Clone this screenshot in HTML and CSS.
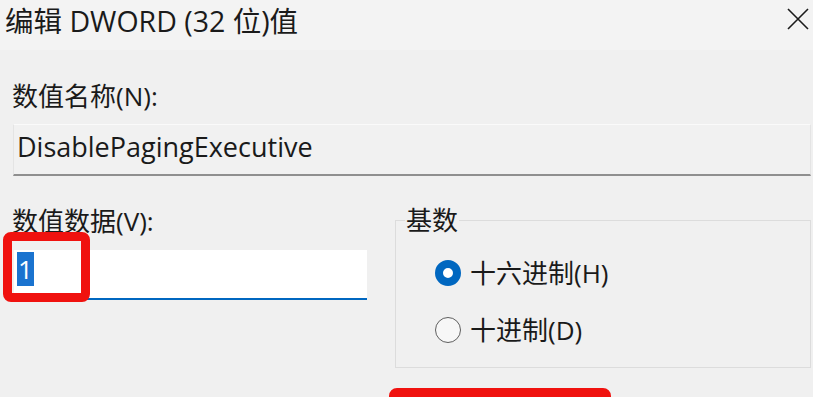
FILE: index.html
```html
<!DOCTYPE html>
<html lang="zh-CN">
<head>
<meta charset="utf-8">
<title>编辑 DWORD (32 位)值</title>
<link rel="stylesheet" href="styles.css">
</head>
<body>
<div class="dialog">
  <div class="titlebar">
    <span class="title">编辑 DWORD (32 位)值</span>
    <svg class="close" width="24" height="22" viewBox="0 0 24 22" aria-hidden="true">
      <path d="M2 1 L22 21 M22 1 L2 21" stroke="#1b1b1b" stroke-width="1.6" fill="none"/>
    </svg>
  </div>
  <div class="content">
    <div class="label first">数值名称(N):</div>
    <div class="namefield">DisablePagingExecutive</div>
    <div class="row">
      <div class="leftcol">
        <div class="label">数值数据(V):</div>
        <div class="valueinput"><span class="sel">1</span></div>
      </div>
      <fieldset class="group">
        <legend>基数</legend>
        <div class="radio"><span class="dot on"></span><span>十六进制(H)</span></div>
        <div class="radio"><span class="dot"></span><span>十进制(D)</span></div>
      </fieldset>
    </div>
  </div>
  <div class="mark mark-value"></div>
  <div class="mark mark-ok"></div>
</div>
</body>
</html>
```
FILE: styles.css
```css
html, body {
  margin: 0;
  padding: 0;
  background: #f0f0f0;
  overflow: hidden;
}
.dialog {
  position: relative;
  width: 813px;
  height: 397px;
  font-family: "Open Sans", "Noto Sans CJK SC", sans-serif;
  color: #1a1a1a;
  overflow: hidden;
}
.titlebar {
  height: 50px;
  background: #f3f3f3;
  display: flex;
  align-items: flex-start;
  justify-content: space-between;
  padding: 0 3px 0 5px;
  box-sizing: border-box;
}
.title {
  font-size: 28.5px;
  line-height: 42px;
}
.close {
  margin-top: 8px;
}
.content {
  padding: 0 2px 0 13px;
}
.label {
  font-size: 26px;
  line-height: 30px;
  margin-left: -1px;
}
.label.first {
  margin-top: 31px;
}
.namefield {
  margin-top: 13px;
  height: 52px;
  box-sizing: border-box;
  border: 1px solid #e4e4e4;
  border-top-color: #fafafa;
  border-bottom: 2px solid #8f8f8f;
  font-size: 27px;
  line-height: 44px;
  padding-left: 3px;
  background: #f1f1f1;
}
.row {
  display: flex;
  align-items: flex-start;
  margin-top: 30px;
}
.leftcol {
  width: 354px;
  margin-right: 28px;
}
.valueinput {
  margin-top: 14px;
  margin-left: 1px;
  height: 50px;
  box-sizing: border-box;
  background: #ffffff;
  border-bottom: 2px solid #0067c0;
  padding: 2px 0 0 3px;
}
.sel {
  display: inline-block;
  background: #1a73cf;
  color: #fff;
  font-size: 26px;
  line-height: 34px;
  padding: 0 1px;
}
.group {
  flex: 1;
  margin: 0;
  border: 1px solid #dcdcdc;
  padding: 10px 0 9px 39px;
  min-width: 0;
}
.group legend {
  font-size: 26px;
  line-height: 28px;
  padding: 0 1px;
  margin-left: -30px;
}
.radio {
  display: flex;
  align-items: center;
  gap: 9px;
  font-size: 26px;
  line-height: 30px;
  height: 57px;
}
.dot {
  width: 26px;
  height: 26px;
  border-radius: 50%;
  box-sizing: border-box;
  border: 1.5px solid #5f5f5f;
  background: #f7f7f7;
  flex: none;
}
.dot.on {
  border: 8px solid #0067c0;
  background: #ffffff;
}
.mark {
  position: absolute;
  border: 9px solid #f0120f;
  border-radius: 8px;
  box-sizing: border-box;
}
.mark-value {
  left: 3px;
  top: 232px;
  width: 87px;
  height: 70px;
}
.mark-ok {
  left: 389px;
  top: 388px;
  width: 222px;
  height: 70px;
}
```
